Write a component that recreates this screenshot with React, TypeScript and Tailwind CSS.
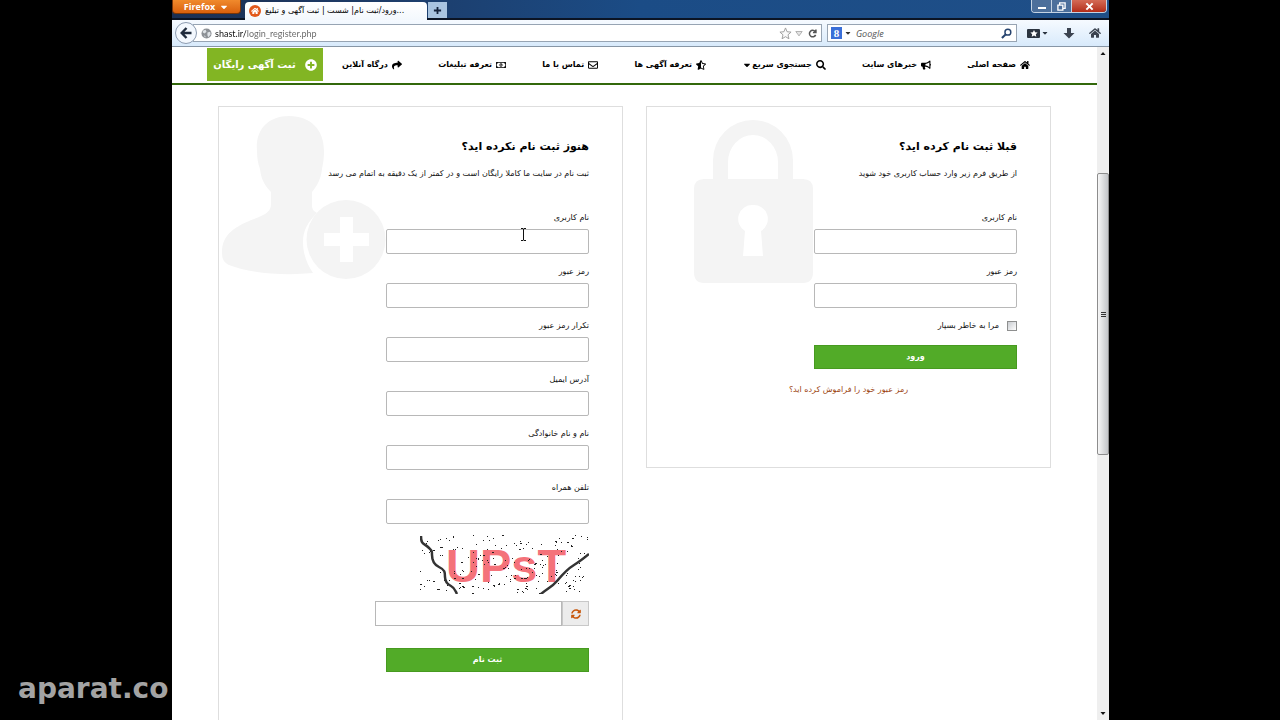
import React from 'react';
import {
  FaBullhorn,
  FaCaretDown,
  FaHome,
  FaPlusCircle,
  FaRegEnvelope,
  FaRegMoneyBillAlt,
  FaSearch,
  FaShare,
  FaStarHalfAlt,
  FaSyncAlt,
} from 'react-icons/fa';

const navItems = [
  { label: 'صفحه اصلی', Icon: FaHome },
  { label: 'خبرهای سایت', Icon: FaBullhorn },
  { label: 'جستجوی سریع', Icon: FaSearch, hasMenu: true },
  { label: 'تعرفه آگهی ها', Icon: FaStarHalfAlt },
  { label: 'تماس با ما', Icon: FaRegEnvelope },
  { label: 'تعرفه تبلیغات', Icon: FaRegMoneyBillAlt },
  { label: 'درگاه آنلاین', Icon: FaShare },
];

const registerFields = [
  { id: 'reg-user', label: 'نام کاربری', type: 'text', hasCursor: true },
  { id: 'reg-pass', label: 'رمز عبور', type: 'password' },
  { id: 'reg-pass2', label: 'تکرار رمز عبور', type: 'password' },
  { id: 'reg-email', label: 'آدرس ایمیل', type: 'email' },
  { id: 'reg-name', label: 'نام و نام خانوادگی', type: 'text' },
  { id: 'reg-phone', label: 'تلفن همراه', type: 'tel' },
];

const TitleBar: React.FC = () => (
  <div className="flex h-5 items-start justify-between border-b-2 border-[#0b1424] bg-linear-to-r from-[#1b2f52] via-[#1b4c86] to-[#1f4f88]">
    <div className="flex">
      <button className="flex h-[14px] w-[69px] items-center justify-center gap-1 rounded-b-sm border border-t-0 border-[#7a3608] bg-linear-to-b from-[#f08a2c] to-[#d9600b] font-['Open_Sans',sans-serif] text-[9px] font-bold text-white">
        Firefox <FaCaretDown className="size-[10px]" />
      </button>
      <div className="ml-1 mt-[2px] flex h-[18px] w-[182px] items-center gap-1 rounded-t-sm bg-linear-to-b from-white to-[#f3f8fd] pl-1">
        <span className="flex size-3 items-center justify-center rounded-full bg-[#e2591b]">
          <FaHome className="size-2 text-white" />
        </span>
        <span dir="rtl" className="whitespace-nowrap text-[8px] leading-4 text-black">
          ...ورود/ثبت نام| شست | ثبت آگهی و تبلیغ
        </span>
      </div>
      <button aria-label="New tab" className="ml-px mt-[2px] flex h-4 w-[19px] items-center justify-center bg-[#a9c4e0]">
        <svg viewBox="0 0 10 10" className="size-[9px]">
          <path d="M5 1v8M1 5h8" stroke="#14233c" strokeWidth="2" />
        </svg>
      </button>
    </div>
    <div className="mr-[2px] flex h-[13px] overflow-hidden rounded-b-sm border border-t-0 border-[#c4d3e4]">
      <button aria-label="Minimize" className="flex w-5 items-center justify-center border-r border-[#c4d3e4] bg-[#4c6f9b]">
        <svg viewBox="0 0 10 10" className="size-[10px]">
          <path d="M1 7h8" stroke="white" strokeWidth="2" />
        </svg>
      </button>
      <button aria-label="Restore" className="flex w-5 items-center justify-center border-r border-[#c4d3e4] bg-[#4c6f9b]">
        <svg viewBox="0 0 10 10" className="size-[9px]" fill="none" stroke="white" strokeWidth="1.5">
          <path d="M3 3V1h6v6H7M1 3.5h5.5V9H1z" />
        </svg>
      </button>
      <button aria-label="Close" className="flex w-[34px] items-center justify-center bg-linear-to-b from-[#d46a55] to-[#b32b17]">
        <svg viewBox="0 0 10 10" className="size-[9px]">
          <path d="M1.5 1.5l7 7M8.5 1.5l-7 7" stroke="white" strokeWidth="2.2" />
        </svg>
      </button>
    </div>
  </div>
);

const ToolBar: React.FC = () => (
  <div className="flex h-[27px] items-center border-b border-[#8796a6] bg-linear-to-b from-[#f6faff] to-[#d8eafb] pl-[3px] pr-2">
    <button aria-label="Back" className="z-10 flex size-[22px] shrink-0 items-center justify-center rounded-full border border-[#8c9bb0] bg-[#f3f8fe]">
      <svg viewBox="0 0 12 12" className="size-3" fill="none" stroke="#1f2b3d" strokeWidth="2.4">
        <path d="M11.5 6H2M6.5 1L1.7 6l4.8 5" />
      </svg>
    </button>
    <div className="-ml-1 flex h-[18px] flex-1 items-center gap-[3px] border border-[#97a4b3] bg-white pl-[7px] pr-1">
      <svg viewBox="0 0 12 12" className="size-[11px]">
        <circle cx="6" cy="6" r="5.5" fill="#8d9196" />
        <path d="M2 3l3-1 1 2-2 2-2-1zM7 5l3-1 .5 3L8 10 7 8zM3 8l2 1-.5 1.5z" fill="#dfe3e7" />
      </svg>
      <input
        aria-label="Address"
        defaultValue="shast.ir/login_register.php"
        className="h-4 min-w-0 flex-1 bg-[linear-gradient(to_right,#111_31px,#666_31px)] bg-clip-text font-['Lato',sans-serif] text-[9px] text-transparent outline-none"
      />
      <svg viewBox="0 0 14 14" className="size-[13px]" fill="#fafafa" stroke="#9a9a9a">
        <path d="M7 1l1.7 4.1 4.3.4-3.3 2.9 1 4.3L7 10.4l-3.7 2.3 1-4.3L1 5.5l4.300-.4z" />
      </svg>
      <svg viewBox="0 0 10 8" className="h-[7px] w-2">
        <path d="M1 1.500h8L5 7z" fill="#e5e5e5" stroke="#a3a3a3" />
      </svg>
      <button aria-label="Reload" className="ml-[2px]">
        <svg viewBox="0 0 10 10" className="size-[9px]" fill="none" stroke="#555" strokeWidth="1.7">
          <path d="M8 2.8A3.6 3.6 0 1 0 8.5 6.5M8.8.5v3.3H5.5" />
        </svg>
      </button>
    </div>
    <div className="ml-[5px] flex h-[18px] w-[190px] items-center border border-[#97a4b3] bg-white pl-[3px] pr-1">
      <span className="flex h-3 w-[11px] items-center justify-center bg-[#3a6fd8] font-['Liberation_Serif',serif] text-[11px] font-bold leading-3 text-white">
        8
      </span>
      <FaCaretDown className="ml-[2px] size-2 text-[#333]" />
      <input
        aria-label="Search"
        placeholder="Google"
        className="ml-1 h-4 min-w-0 flex-1 font-['Open_Sans',sans-serif] text-[9px] italic outline-none placeholder:text-[#555]"
      />
      <svg viewBox="0 0 12 12" className="size-[11px]" fill="none" stroke="#27446f">
        <circle cx="7.5" cy="4.5" r="3.2" strokeWidth="1.6" />
        <path d="M5 7L1 11" strokeWidth="2.2" />
      </svg>
    </div>
    <button aria-label="Bookmarks" className="ml-[10px] flex items-center gap-px text-[#2b3440]">
      <svg viewBox="0 0 13 11" className="h-[11px] w-[13px]">
        <rect y="1" width="13" height="9" rx="1" fill="#2b3440" />
        <path d="M7 1.900l1.100 2.300 2.500.3-1.800 1.700.5 2.500L7 7.500 4.700 8.700l.5-2.500-1.800-1.700 2.500-.3z" fill="white" />
      </svg>
      <FaCaretDown className="size-2" />
    </button>
    <button aria-label="Downloads" className="ml-[14px]">
      <svg viewBox="0 0 12 12" className="size-3">
        <path d="M4 1h4v5h3.500L6 11.500.5 6H4z" fill="#3b4350" />
      </svg>
    </button>
    <button aria-label="Home" className="ml-[14px] text-[#3b4350]">
      <FaHome className="size-3" />
    </button>
  </div>
);

const ScrollBar: React.FC = () => (
  <div className="flex w-3 shrink-0 flex-col items-center bg-[#efefef]">
    <svg viewBox="0 0 12 12" className="h-3 w-3">
      <path d="M3.500 8h5L6 5z" fill="#111" />
    </svg>
    <div className="mt-[114px] flex h-[282px] w-full flex-col items-center justify-center gap-px rounded-xs border border-[#8d8d8d] bg-linear-to-r from-[#f7f7f7] to-[#c3c5c8]">
      <span className="h-px w-[5px] bg-[#333]" />
      <span className="h-px w-[5px] bg-[#333]" />
      <span className="h-px w-[5px] bg-[#333]" />
    </div>
    <svg viewBox="0 0 12 12" className="mt-auto h-3 w-3">
      <path d="M3.500 4h5L6 7z" fill="#111" />
    </svg>
  </div>
);

const SiteHeader: React.FC = () => (
  <header className="flex h-[38px] items-start justify-between border-b-2 border-[#33680b] pl-[35px] pr-[67px]">
    <nav className="flex h-9 flex-1 items-center justify-between">
      {navItems.map(({ label, Icon, hasMenu }) => (
        <a key={label} href="#" className="flex items-center gap-1 whitespace-nowrap text-[8px] font-bold text-black">
          <Icon className="size-[10px]" />
          <span>{label}</span>
          {hasMenu && <FaCaretDown className="-ms-1 size-[10px]" />}
        </a>
      ))}
    </nav>
    <a href="#" className="ms-[19px] mt-px flex h-[33px] w-[116px] items-center justify-center gap-[9px] whitespace-nowrap bg-[#82b523] text-[10px] font-bold text-white">
      <FaPlusCircle className="size-3 shrink-0" />
      ثبت آگهی رایگان
    </a>
  </header>
);

interface FieldProps {
  id: string;
  label: string;
  type: string;
  hasCursor?: boolean;
}

const Field: React.FC<FieldProps> = ({ id, label, type, hasCursor }) => (
  <div className="relative mb-[11px] w-[203px]">
    <label htmlFor={id} className="block text-[8px] leading-[14px] text-[#111]">{label}</label>
    <input id={id} type={type} className="mt-1 block h-[25px] w-full rounded-xs border border-[#b8b8b8] bg-white px-2 text-[9px] outline-none" />
    {hasCursor && (
      <svg viewBox="0 0 7 13" className="absolute left-[134px] top-[17px] h-[13px] w-[7px]" fill="none" stroke="#111">
        <path d="M1 .5h2l.5.5.5-.5h2M3.500 1v11M1 12.500h2l.5-.5.5.5h2" />
      </svg>
    )}
  </div>
);

const submitClass = 'h-6 w-[203px] border border-[#479a20] bg-[#52ab28] text-[8px] font-bold text-white';

const LoginCard: React.FC = () => (
  <section className="relative border border-[#dedede] px-[33px] pb-[70px] pt-[30px]">
    <svg viewBox="0 0 119 163" className="absolute left-[47px] top-[13px] h-[163px] w-[119px]">
      <path d="M19 60V40a40 40 0 0 1 80 0v20H84V42a25 27 0 0 0-50 0v18z" fill="#f4f4f4" />
      <path
        fillRule="evenodd"
        d="M10 59h99q10 0 10 10v83q0 11-10 11H10q-10 0-10-11V69q0-10 10-10zM59 85a14 14 0 0 0-8 26l-2 25h20l-2-25a14 14 0 0 0-8-26z"
        fill="#f4f4f4"
      />
    </svg>
    <div className="relative">
      <h2 className="text-[11px] font-bold leading-5 text-black">قبلا ثبت نام کرده اید؟</h2>
      <p className="mb-[30px] mt-[10px] text-[8px] leading-[14px] text-[#111]">از طریق فرم زیر وارد حساب کاربری خود شوید</p>
      <form>
        <Field id="login-user" label="نام کاربری" type="text" />
        <Field id="login-pass" label="رمز عبور" type="password" />
        <label className="flex items-center gap-2 text-[8px] leading-[14px] text-[#111]">
          <input type="checkbox" className="size-[10px] appearance-none border border-[#8e8f8f] bg-linear-to-br from-[#c9ccd0] to-white" />
          مرا به خاطر بسپار
        </label>
        <button type="button" className={`mt-3 block ${submitClass}`}>ورود</button>
      </form>
      <p className="mt-[14px] text-center text-[8px] leading-[14px]">
        <a href="#" className="text-[#9c4410]">رمز عبور خود را فراموش کرده اید؟</a>
      </p>
    </div>
  </section>
);

// fixed seed so the noise stays the same on every render
const makeNoise = (count: number) => {
  let seed = 7;
  const next = () => {
    seed = (seed * 16807) % 2147483647;
    return seed / 2147483647;
  };
  return Array.from({ length: count }, () => ({ x: next() * 168, y: next() * 59, r: next() > 0.8 ? 2 : 1 }));
};

const noise = makeNoise(210);

const Captcha: React.FC = () => (
  <svg viewBox="0 0 169 59" className="h-[59px] w-[169px]">
    <text x="26" y="47" direction="ltr" fontSize="47" fontWeight="bold" fill="#f4727a" className="font-['Liberation_Sans',sans-serif]">
      UPsT
    </text>
    {noise.map((dot, i) => (
      <rect key={i} x={Math.round(dot.x)} y={Math.round(dot.y)} width={dot.r} height="1" fill="#222" />
    ))}
    <g fill="none" stroke="#333" strokeWidth="2.5">
      <path d="M1 1c0 9 3 7 7 11s4 3 4 8 1 9 7 12 6 5 6 10 2 7 6 9 4 4 6 8" />
      <path d="M121 59c7-6 11-7 16-13s12-13 17-16 9-6 15-11" />
    </g>
  </svg>
);

const RegisterCard: React.FC = () => (
  <section className="relative border border-[#dedede] px-[33px] pb-[70px] pt-[30px]">
    <svg viewBox="0 0 164 163" className="absolute left-[3px] top-[9px] h-[163px] w-[164px]" fill="#f4f4f4">
      <path d="M67 0c22 0 35 14 35 35 0 8-1 13-2 18-1 10-5 17-10 23v13c0 5 2 6 5 8-9 9-14 17-14 29 0 12 4 22 10 31-30 3-64 0-84-8-6-3-7-7-7-13 0-18 14-26 32-33 13-5 17-8 17-15V76c-7-7-10-14-11-23-2-5-3-11-3-18C33 14 46 0 67 0z" />
      <path fillRule="evenodd" d="M124 84a39 39 0 1 1 0 79 39 39 0 0 1 0-79zM118 101v16h-16v13h16v16h13v-16h16v-13h-16v-16z" />
    </svg>
    <div className="relative">
      <h2 className="text-[11px] font-bold leading-5 text-black">هنوز ثبت نام نکرده اید؟</h2>
      <p className="mb-[30px] mt-[10px] whitespace-nowrap text-[8px] leading-[14px] text-[#111]">
        ثبت نام در سایت ما کاملا رایگان است و در کمتر از یک دقیقه به اتمام می رسد
      </p>
      <form>
        {registerFields.map((field) => (
          <Field key={field.id} {...field} />
        ))}
        <Captcha />
        <div className="mt-[7px] flex h-[25px] w-[214px]">
          <button type="button" aria-label="تازه سازی" className="flex w-[27px] items-center justify-center border border-[#c8c8c8] bg-[#ececec] text-[#c8570c]">
            <FaSyncAlt className="size-[10px]" />
          </button>
          <input aria-label="کد امنیتی" className="min-w-0 flex-1 border border-[#b8b8b8] bg-white px-2 text-[9px] outline-none" />
        </div>
        <button type="button" className={`mt-[22px] block ${submitClass}`}>ثبت نام</button>
      </form>
    </div>
  </section>
);

export default function App() {
  return (
    <div className="flex h-screen overflow-hidden bg-black font-['DejaVu_Sans',sans-serif]">
      <aside className="flex w-[172px] shrink-0 items-end pb-[15px] pl-[18px]">
        <span className="text-[28px] font-bold leading-8 text-[#a3a3a3]">aparat.co</span>
      </aside>
      <div className="flex min-w-0 flex-1 flex-col bg-white">
        <TitleBar />
        <ToolBar />
        <div className="flex min-h-0 flex-1">
          <main dir="rtl" className="min-w-0 flex-1 overflow-hidden">
            <SiteHeader />
            <div className="grid grid-cols-2 items-start gap-[23px] pl-[46px] pr-[46px] pt-[21px]">
              <LoginCard />
              <RegisterCard />
            </div>
          </main>
          <ScrollBar />
        </div>
      </div>
      <div className="w-[171px] shrink-0" />
    </div>
  );
}
